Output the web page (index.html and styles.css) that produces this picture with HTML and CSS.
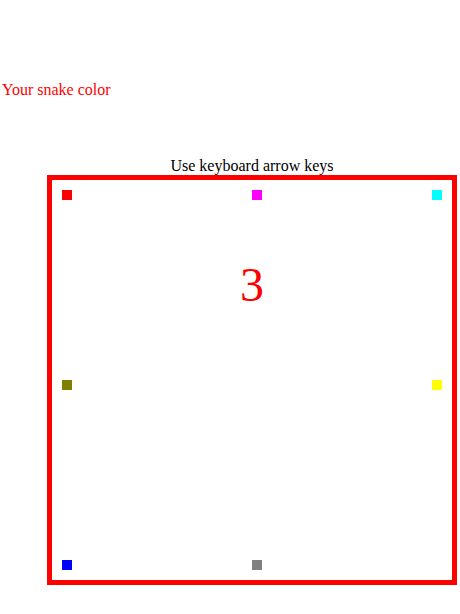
FILE: index.html
```html
<!DOCTYPE html>
<html>
<head>
<meta charset="utf-8">
<link rel="stylesheet" href="styles.css">
</head>
<body>
<div class="color-row">Your snake color</div>
<div class="game">
  <div class="hint">Use keyboard arrow keys</div>
  <div class="board">
    <div class="count">3</div>
    <span class="dot c-red" style="left:10px;top:10px"></span>
    <span class="dot c-magenta" style="left:200px;top:10px"></span>
    <span class="dot c-cyan" style="left:380px;top:10px"></span>
    <span class="dot c-olive" style="left:10px;top:200px"></span>
    <span class="dot c-yellow" style="left:380px;top:200px"></span>
    <span class="dot c-blue" style="left:10px;top:380px"></span>
    <span class="dot c-gray" style="left:200px;top:380px"></span>
  </div>
</div>
</body>
</html>
```
FILE: styles.css
```css
html, body {
  margin: 0;
  padding: 0;
  background: #fff;
}
body {
  font-family: "Liberation Serif", "Times New Roman", serif;
  font-size: 16px;
  color: #000;
}
.color-row {
  color: #ff0000;
  margin-top: 81px;
  padding-left: 2px;
  line-height: 18px;
}
.game {
  margin-top: 58px;
  margin-left: 47px;
  width: 410px;
}
.hint {
  text-align: center;
  line-height: 18px;
}
.board {
  position: relative;
  width: 400px;
  height: 400px;
  border: 5px solid #ff0000;
}
.count {
  position: absolute;
  left: 0;
  right: 0;
  top: 77px;
  text-align: center;
  color: #ff0000;
  font-size: 48px;
  line-height: 55px;
}
.dot {
  position: absolute;
  width: 10px;
  height: 10px;
}
.c-red { background: #ff0000; }
.c-magenta { background: #ff00ff; }
.c-cyan { background: #00ffff; }
.c-olive { background: #808000; }
.c-yellow { background: #ffff00; }
.c-blue { background: #0000ff; }
.c-gray { background: #808080; }
```
